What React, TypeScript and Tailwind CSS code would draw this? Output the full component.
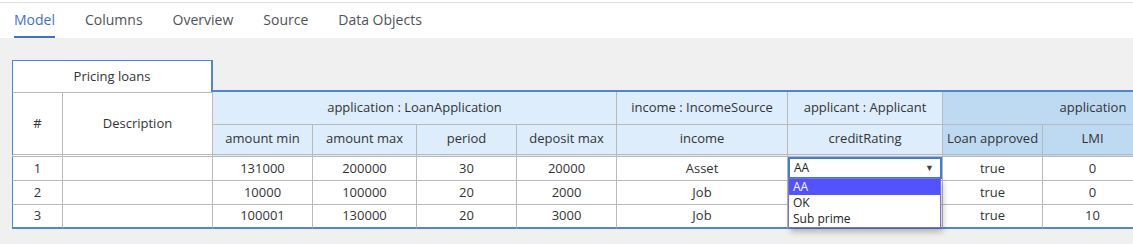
import React from 'react';

const tabs = ['Model', 'Columns', 'Overview', 'Source', 'Data Objects'];

const rows = [
  ['1', '', '131000', '200000', '30', '20000', 'Asset', 'AA', 'true', '0', ''],
  ['2', '', '10000', '100000', '20', '2000', 'Job', '', 'true', '0', ''],
  ['3', '', '100001', '130000', '20', '3000', 'Job', '', 'true', '10', ''],
];

const subHeaders = ['amount min', 'amount max', 'period', 'deposit max', 'income', 'creditRating', 'Loan approved', 'LMI', ''];

const light = 'bg-[#ddedfc]';
const dark = 'bg-[#bedaf3]';

const CreditSelect: React.FC = () => (
  <>
    <div className="absolute left-0 top-0 z-10 flex h-[22px] w-[154px] items-center justify-between border-2 border-[#3f7fd3] bg-white pl-[4px] pr-[6px] text-[12px] text-[#222]">
      <span className="text-left">AA</span>
      <span className="text-[9px] text-[#444]">▼</span>
    </div>
    <div className="absolute left-0 top-[21px] z-10 flex w-[153px] flex-col border border-[#7b70cc] bg-white text-left text-[12px] leading-[16px] text-[#222] shadow-[2px_4px_6px_rgba(0,0,0,0.25)]">
      <div className="bg-[#5252ff] pl-[4px] text-white">AA</div>
      <div className="pl-[4px]">OK</div>
      <div className="pl-[4px]">Sub prime</div>
    </div>
  </>
);

export default function App() {
  return (
    <div className="h-[244px] w-[1133px] overflow-hidden bg-[#f0f0f0] font-['Open_Sans',sans-serif] text-[#333]">
      <div className="bg-white pt-[2px]">
        <div className="flex h-[36px] gap-[30px] border-t border-[#dedede] pl-[14px] text-[14px]">
          {tabs.map((t, i) => (
            <div
              key={t}
              className={`flex h-full items-center ${
                i === 0 ? 'border-b-2 border-[#3f73c8] text-[#3f73c8]' : 'border-b-2 border-transparent text-[#4f5358]'
              }`}
            >
              {t}
            </div>
          ))}
        </div>
      </div>

      <div className="pl-[12px] pt-[22px]">
        <div className="grid grid-cols-[51px_150px_100px_104px_100px_100px_171px_155px_100px_100px_100px] grid-rows-[32px_33px_32px_24px_24px_24px] text-[13px] text-center">
          {/* caption row */}
          <div className="col-span-2 flex items-center justify-center border-l border-t border-r-2 border-[#4d86d6] bg-white">
            Pricing loans
          </div>
          <div className="col-span-9 border-b-2 border-[#4d86d6]" />

          {/* header row 1 */}
          <div className="row-span-2 flex items-center justify-center border-l border-l-[#4d86d6] border-t border-t-[#b9b9b9] border-r border-r-[#b9b9b9] border-b-[3px] border-b-[#b9b9b9] bg-white [border-bottom-style:double]">
            #
          </div>
          <div className="row-span-2 flex items-center justify-center border-t border-r border-b-[3px] border-[#b9b9b9] bg-white [border-bottom-style:double]">
            Description
          </div>
          <div className={`col-span-4 flex items-center justify-center border-r border-b border-[#b9b9b9] ${light}`}>
            application : LoanApplication
          </div>
          <div className={`flex items-center justify-center border-r border-b border-[#b9b9b9] ${light}`}>
            income : IncomeSource
          </div>
          <div className={`flex items-center justify-center border-r border-b border-[#b9b9b9] ${light}`}>
            applicant : Applicant
          </div>
          <div className={`col-span-3 flex items-center justify-center border-b border-[#b9b9b9] ${dark}`}>
            application
          </div>

          {/* header row 2 */}
          {subHeaders.map((h, i) => (
            <div
              key={i}
              className={`flex items-center justify-center border-r border-b-[3px] border-[#b9b9b9] pb-[1px] [border-bottom-style:double] ${
                i >= 6 ? dark : light
              }`}
            >
              {h}
            </div>
          ))}

          {/* data rows */}
          {rows.map((r, ri) =>
            r.map((c, ci) => {
              const last = ri === rows.length - 1;
              return (
                <div
                  key={`${ri}-${ci}`}
                  className={`relative flex items-center justify-center bg-white border-r border-[#b9b9b9] ${
                    last ? 'border-b-2 border-b-[#4d86d6]' : 'border-b'
                  } ${ci === 0 ? 'border-l border-l-[#4d86d6]' : ''}`}
                >
                  {ri === 0 && ci === 7 ? <CreditSelect /> : c}
                </div>
              );
            })
          )}
        </div>
      </div>
    </div>
  );
}
